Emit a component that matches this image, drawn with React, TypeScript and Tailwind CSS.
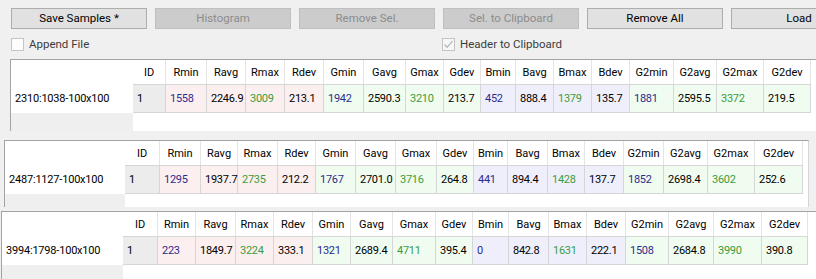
import React from 'react'

const headers = ['ID', 'Rmin', 'Ravg', 'Rmax', 'Rdev', 'Gmin', 'Gavg', 'Gmax', 'Gdev', 'Bmin', 'Bavg', 'Bmax', 'Bdev', 'G2min', 'G2avg', 'G2max', 'G2dev']
const groups = ['id', 'r', 'r', 'r', 'r', 'g', 'g', 'g', 'g', 'b', 'b', 'b', 'b', 'g', 'g', 'g', 'g']

const cellBg: Record<string, string> = {
  id: 'bg-[#ececec]',
  r: 'bg-[#fcefef]',
  g: 'bg-[#effcef]',
  b: 'bg-[#efeffc]',
}

const tables = [
  {
    label: '2310:1038-100x100',
    values: ['1', '1558', '2246.9', '3009', '213.1', '1942', '2590.3', '3210', '213.7', '452', '888.4', '1379', '135.7', '1881', '2595.5', '3372', '219.5'],
    widths: [33, 41, 39, 39, 39, 40, 42, 38, 37, 35, 38, 38, 38, 44, 43, 47, 47],
    box: 'ml-[10px] mt-[8px] h-[72px] self-stretch',
    head: 'w-[122px]',
  },
  {
    label: '2487:1127-100x100',
    values: ['1', '1295', '1937.7', '2735', '212.2', '1767', '2701.0', '3716', '264.8', '441', '894.4', '1428', '137.7', '1852', '2698.4', '3602', '252.6'],
    widths: [35, 41, 37, 40, 38, 40, 40, 41, 37, 34, 40, 37, 39, 40, 44, 47, 48],
    box: 'ml-[4px] mt-[9px] h-[67px] w-[805px] border-r border-r-[#d4d4d4]',
    head: 'w-[120px]',
  },
  {
    label: '3994:1798-100x100',
    values: ['1', '223', '1849.7', '3224', '333.1', '1321', '2689.4', '4711', '395.4', '0', '842.8', '1631', '222.1', '1508', '2684.8', '3990', '390.8'],
    widths: [35, 38, 40, 38, 39, 38, 42, 43, 37, 36, 40, 38, 39, 43, 45, 48, 46],
    box: 'ml-[1px] mt-[4px] flex-1 self-stretch',
    head: 'w-[121px]',
  },
]

function valueColor(h: string) {
  if (h.endsWith('min')) return 'text-[#2c2c8e]'
  if (h.endsWith('max')) return 'text-[#3d9b3d]'
  return 'text-black'
}

function Grid({ t }: { t: (typeof tables)[number] }) {
  return (
    <div className={`flex flex-col bg-white border-l border-t border-[#a3a3a3] overflow-hidden ${t.box}`}>
      {/* header row */}
      <div className="flex h-[24px] shrink-0">
        <div className={`${t.head} shrink-0`} />
        {headers.map((h, i) => (
          <div
            key={h}
            style={{ width: t.widths[i] }}
            className="shrink-0 flex items-center justify-center border-r border-[#e4e4e4] text-black"
          >
            {h}
          </div>
        ))}
        <div className="flex-1" />
      </div>
      {/* data row */}
      <div className="flex h-[29px] shrink-0">
        <div className={`${t.head} shrink-0 flex items-center pl-[4px] text-black tracking-[-0.2px]`}>{t.label}</div>
        {t.values.map((v, i) => (
          <div
            key={i}
            style={{ width: t.widths[i] }}
            className={`shrink-0 flex items-center pl-[4px] border-y border-r border-[#d6d6d6] whitespace-nowrap tracking-[-0.25px] ${cellBg[groups[i]]} ${valueColor(headers[i])}`}
          >
            {v}
          </div>
        ))}
        <div className="flex-1" />
      </div>
      {/* empty area */}
      <div className="flex flex-1">
        <div className={`${t.head} shrink-0 bg-[#efefef]`} />
        <div className="flex-1 bg-white" />
      </div>
    </div>
  )
}

function Btn({ label, disabled }: { label: string; disabled?: boolean }) {
  return (
    <button
      className={`w-[136px] h-[21px] shrink-0 flex items-center justify-center border text-[11.5px] ${
        disabled ? 'bg-[#cccccc] border-[#bfbfbf] text-[#8c8c8c]' : 'bg-[#e1e1e1] border-[#adadad] text-black'
      }`}
    >
      {label}
    </button>
  )
}

export default function App() {
  return (
    <div className="w-[816px] h-[279px] bg-[#f0f0f0] flex flex-col overflow-hidden font-['Roboto',sans-serif] text-[11px] leading-none">
      {/* buttons */}
      <div className="flex gap-[8px] mt-[8px] ml-[11px] shrink-0">
        <Btn label="Save Samples *" />
        <Btn label="Histogram" disabled />
        <Btn label="Remove Sel." disabled />
        <Btn label="Sel. to Clipboard" disabled />
        <Btn label="Remove All" />
        <Btn label="Load" />
      </div>

      {/* checkboxes */}
      <div className="flex mt-[9px] ml-[11px] h-[13px] shrink-0 text-[#3c3c3c] text-[11.5px]">
        <div className="w-[431px] flex items-center gap-[5px]">
          <span className="w-[13px] h-[13px] border border-[#c4c4c4] bg-[#fdfdfd]" />
          <span>Append File</span>
        </div>
        <div className="flex items-center gap-[5px]">
          <span className="w-[13px] h-[13px] border border-[#c4c4c4] bg-[#f7f7f7] flex items-center justify-center">
            <svg width="11" height="11" viewBox="0 0 11 11">
              <polyline points="1.5,5.5 4.2,8.3 9.5,2" fill="none" stroke="#a8a8a8" strokeWidth="1.1" />
            </svg>
          </span>
          <span>Header to Clipboard</span>
        </div>
      </div>

      {tables.map((t) => (
        <Grid key={t.label} t={t} />
      ))}
    </div>
  )
}
